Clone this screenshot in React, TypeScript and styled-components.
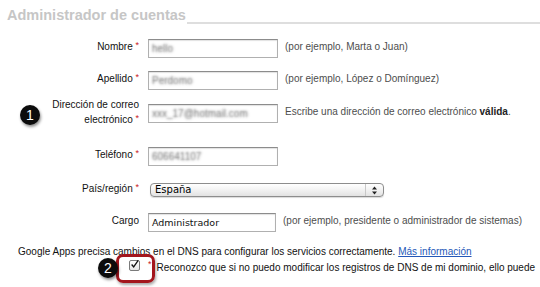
import React from 'react';
import styled, { createGlobalStyle } from 'styled-components';

const GlobalStyle = createGlobalStyle`
  html, body {
    margin: 0;
    padding: 0;
    background: #fff;
    overflow: hidden;
  }
  body {
    font-family: "Liberation Sans", Arial, sans-serif;
    font-size: 10px;
    color: #1a1a1a;
  }
`;

const Page = styled.div`
  position: relative;
  width: 540px;
  height: 287px;
  overflow: hidden;
`;

const Header = styled.div`
  display: flex;
  align-items: flex-end;
  height: 24px;
  padding: 7px 0 0 7px;
  box-sizing: border-box;
`;

const Title = styled.h2`
  margin: 0;
  font-size: 14.5px;
  line-height: 17px;
  font-weight: bold;
  color: #c6c6c6;
  white-space: nowrap;
`;

const TitleRule = styled.div`
  flex: 1;
  height: 2px;
  margin: 0 0 0 1px;
  background: #dedede;
`;

const Form = styled.div`
  display: flex;
  flex-direction: column;
  padding-top: 8px;
`;

const Row = styled.div<{ $h: number }>`
  display: flex;
  align-items: center;
  height: ${p => p.$h}px;
`;

const Label = styled.div`
  width: 139px;
  flex: none;
  text-align: right;
  line-height: 15px;
  padding-bottom: 3px;
  margin-right: 9px;
  color: #111;
  white-space: nowrap;
`;

const Req = styled.span`
  color: #c8161d;
  font-size: 9px;
  line-height: 0;
  vertical-align: 2px;
`;

const Input = styled.div<{ $w?: number }>`
  width: ${p => p.$w ?? 130}px;
  height: 19px;
  box-sizing: border-box;
  flex: none;
  border: 1px solid #b0b0b0;
  border-top-color: #8c8c8c;
  box-shadow: inset 0 1px 1px rgba(0, 0, 0, 0.12);
  background: #fff;
  display: flex;
  align-items: center;
  padding-left: 3px;
  overflow: hidden;
`;

const Blurred = styled.span`
  color: transparent;
  text-shadow: 0 0 2.5px rgba(90, 90, 90, 0.9);
  font-size: 10px;
  white-space: nowrap;
`;

const InputText = styled.span`
  font-family: "DejaVu Sans", sans-serif;
  font-size: 9.5px;
  color: #111;
`;

const Hint = styled.div`
  margin-left: 7px;
  padding-bottom: 3px;
  color: #4d4d4d;
  white-space: nowrap;
`;

const Strong = styled.span`
  color: #222;
  font-weight: bold;
`;

const Select = styled.div`
  margin-left: 2px;
  width: 234px;
  height: 14px;
  box-sizing: border-box;
  border: 1px solid #8d8d8d;
  border-radius: 4px;
  background: linear-gradient(#ffffff, #f2f2f2 50%, #e2e2e2);
  box-shadow: 0 1px 1px rgba(0, 0, 0, 0.15);
  display: flex;
  align-items: center;
  font-family: "DejaVu Sans", sans-serif;
  font-size: 10px;
  color: #000;
`;

const SelectText = styled.span`
  flex: 1;
  padding-left: 4px;
  line-height: 12px;
`;

const SelectArrows = styled.span`
  width: 17px;
  height: 100%;
  border-left: 1px solid #c8c8c8;
  display: flex;
  align-items: center;
  justify-content: center;
`;

const Notice = styled.div`
  padding-left: 18px;
  white-space: nowrap;
  color: #111;
`;

const Link = styled.a`
  color: #2458b8;
  text-decoration: underline;
`;

const AgreeRow = styled.div`
  display: flex;
  align-items: center;
  padding-left: 129px;
  height: 20px;
  white-space: nowrap;
`;

const Checkbox = styled.span`
  width: 11px;
  height: 11px;
  box-sizing: border-box;
  border: 1px solid #7a7a7a;
  border-radius: 2px;
  background: linear-gradient(#fff, #e6e6e6);
  display: inline-flex;
  align-items: center;
  justify-content: center;
  overflow: visible;
  margin-top: -3px;
`;

const AgreeReq = styled.span`
  color: #c8161d;
  font-size: 9px;
  margin: -6px 0 0 8px;
`;

const AgreeText = styled.span`
  margin-left: 5px;
  color: #111;
`;

const Badge = styled.div<{ $x: number; $y: number }>`
  position: absolute;
  left: ${p => p.$x}px;
  top: ${p => p.$y}px;
  width: 20px;
  height: 20px;
  border-radius: 50%;
  background: #0c0c0c;
  box-shadow: 1px 2px 3px rgba(0, 0, 0, 0.45);
  color: #fff;
  font-family: "Liberation Sans", Arial, sans-serif;
  font-size: 14px;
  line-height: 20px;
  text-align: center;
  z-index: 2;
`;

const Highlight = styled.div`
  position: absolute;
  left: 116px;
  top: 254px;
  width: 39px;
  height: 29px;
  box-sizing: border-box;
  border: 3px solid #a3161d;
  border-radius: 7px;
  box-shadow: 1px 2px 3px rgba(0, 0, 0, 0.35);
  z-index: 1;
`;

const Field = ({ label, value, hint }: { label: React.ReactNode; value: string; hint?: React.ReactNode }) => (
  <>
    <Label>{label} <Req>*</Req></Label>
    <Input><Blurred>{value}</Blurred></Input>
    {hint && <Hint>{hint}</Hint>}
  </>
);

export default function App() {
  return (
    <Page>
      <GlobalStyle />
      <Header>
        <Title>Administrador de cuentas</Title>
        <TitleRule />
      </Header>
      <Form>
        <Row $h={32}>
          <Field label="Nombre" value="hello" hint="(por ejemplo, Marta o Juan)" />
        </Row>
        <Row $h={32}>
          <Field label="Apellido" value="Perdomo" hint="(por ejemplo, López o Domínguez)" />
        </Row>
        <Row $h={34}>
          <Label>
            Dirección de correo<br />electrónico <Req>*</Req>
          </Label>
          <Input><Blurred>xxx_17@hotmail.com</Blurred></Input>
          <Hint>Escribe una dirección de correo electrónico <Strong>válida</Strong>.</Hint>
        </Row>
        <Row $h={52}>
          <Field label="Teléfono" value="606641107" />
        </Row>
        <Row $h={16}>
          <Label>País/región <Req>*</Req></Label>
          <Select>
            <SelectText>España</SelectText>
            <SelectArrows>
              <svg width="7" height="9" viewBox="0 0 7 9">
                <path d="M3.5 0.5 L6 3.5 H1 Z M3.5 8.5 L6 5.5 H1 Z" fill="#222" />
              </svg>
            </SelectArrows>
          </Select>
        </Row>
        <Row $h={48}>
          <Label>Cargo</Label>
          <Input $w={128}><InputText>Administrador</InputText></Input>
          <Hint>(por ejemplo, presidente o administrador de sistemas)</Hint>
        </Row>
        <Notice>
          Google Apps precisa cambios en el DNS para configurar los servicios correctamente.{' '}
          <Link href="#">Más información</Link>
        </Notice>
        <AgreeRow>
          <Checkbox>
            <svg width="11" height="11" viewBox="0 0 11 11" style={{ marginTop: -3 }}>
              <path d="M2 5.5 L4.5 8.5 L10 0.5" fill="none" stroke="#111" strokeWidth="1.6" />
            </svg>
          </Checkbox>
          <AgreeReq>*</AgreeReq>
          <AgreeText>
            Reconozco que si no puedo modificar los registros de DNS de mi dominio, ello puede
          </AgreeText>
        </AgreeRow>
      </Form>
      <Badge $x={20} $y={105}>1</Badge>
      <Badge $x={98} $y={258}>2</Badge>
      <Highlight />
    </Page>
  );
}
